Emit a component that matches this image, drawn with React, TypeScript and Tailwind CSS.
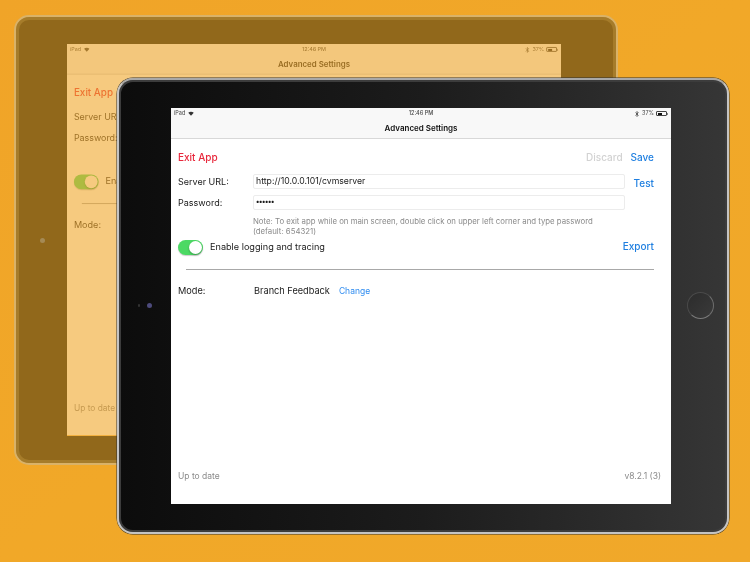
import { Bluetooth } from 'lucide-react';

const blue = 'text-[#1f7fe0]';

function Screen() {
    return (
        <div className="w-[500px] h-[396px] bg-white flex flex-col font-['Inter',sans-serif] text-[#1a1a1a] blur-[0.25px]">
            {/* Status + nav bar */}
            <div className="h-[31px] bg-[#f8f8f8] border-b border-[#d8d8d8] flex flex-col shrink-0">
                <div className="h-[11px] pl-[3px] pr-[3px] flex items-center justify-between text-[5.5px] text-[#444] relative">
                    <div className="flex items-center gap-[3px]">
                        <span>iPad</span>
                        <svg viewBox="0 0 12 9" className="w-[6px] h-[5px] fill-[#333]">
                            <path d="M6 9 0.5 3.2C3.6 0.2 8.4 0.2 11.5 3.2Z" />
                        </svg>
                    </div>
                    <span className="absolute left-1/2 -translate-x-1/2 font-medium">12:46 PM</span>
                    <div className="flex items-center gap-[2px]">
                        <Bluetooth className="w-[6px] h-[6px]" strokeWidth={3} />
                        <span>37%</span>
                        <div className="flex items-center">
                            <div className="w-[11px] h-[5px] border-[0.5px] border-[#444] rounded-[1px] p-[0.5px]">
                                <div className="w-[4.5px] h-full bg-[#111]" />
                            </div>
                            <div className="w-[1px] h-[2px] bg-[#888]" />
                        </div>
                    </div>
                </div>
                <div className="flex-1 flex items-center justify-center text-[8px] font-semibold text-[#111] pb-[1px]">
                    Advanced Settings
                </div>
            </div>

            {/* Form */}
            <div className="flex-1 flex flex-col pl-[7px] pr-[17px] pt-[11px]">
                <div className="flex items-center justify-between h-[14px] text-[10px] font-medium">
                    <span className="text-[#e8283c]">Exit App</span>
                    <div className="flex gap-[8px]">
                        <span className="text-[#d2d2d2]">Discard</span>
                        <span className={blue}>Save</span>
                    </div>
                </div>

                <div className="flex items-center h-[15px] mt-[10px] text-[9px]">
                    <span className="w-[75px] shrink-0">Server URL:</span>
                    <div className="w-[372px] h-[15px] border border-[#ececec] rounded-[2px] flex items-center px-[2px] text-[8.7px]">
                        http://10.0.0.101/cvmserver
                    </div>
                    <span className={`ml-auto mt-[4px] text-[10px] font-medium ${blue}`}>Test</span>
                </div>

                <div className="flex items-center h-[15px] mt-[6px] text-[9px]">
                    <span className="w-[75px] shrink-0">Password:</span>
                    <div className="w-[372px] h-[15px] border border-[#ececec] rounded-[2px] flex items-center px-[2px] text-[7px] font-bold tracking-[-0.3px]">
                        ••••••
                    </div>
                </div>

                <div className="ml-[75px] mt-[6px] text-[7.8px] leading-[10px] text-[#8a8a8a]">
                    <div>Note: To exit app while on main screen, double click on upper left corner and type password</div>
                    <div>(default: 654321)</div>
                </div>

                <div className="flex items-center h-[16px] mt-[3px]">
                    <div className="w-[25px] h-[15px] rounded-full bg-[#4cd964] flex items-center justify-end p-[1px] shadow-[0_1px_1px_rgba(0,0,0,0.2)]">
                        <div className="w-[13px] h-[13px] rounded-full bg-white shadow-[0_1px_2px_rgba(0,0,0,0.3)]" />
                    </div>
                    <span className="ml-[7px] mb-[1px] text-[9.15px]">Enable logging and tracing</span>
                    <span className={`ml-auto mb-[1px] text-[10px] font-medium ${blue}`}>Export</span>
                </div>

                <div className="h-px bg-[#a8a8a8] ml-[8px] mt-[14px]" />

                <div className="flex items-center h-[12px] mt-[15px] text-[9.2px]">
                    <span className="w-[76px] shrink-0">Mode:</span>
                    <span>Branch Feedback</span>
                    <span className="ml-[9px] text-[8.5px] text-[#2f8cf0]">Change</span>
                </div>

                <div className="mt-auto mb-[21px] -mr-[7px] flex justify-between text-[8.5px] text-[#8a8a8a]">
                    <span>Up to date</span>
                    <span>v8.2.1 (3)</span>
                </div>
            </div>
        </div>
    );
}

export default function App() {
    return (
        <div className="relative w-[750px] h-[562px] overflow-hidden bg-gradient-to-br from-[#f0a428] via-[#f1a828] to-[#f0a82a]">
            {/* Back tablet, faded into the orange */}
            <div className="absolute left-[14px] top-[15px] w-[604px] h-[450px] rounded-[15px] border-[2px] border-[#d9b268] bg-[#91681b] shadow-[inset_0_0_0_3px_#a67c2a]">
                <div className="absolute left-[51px] top-[27px] w-[494px] h-[392px] bg-[#f1a72a] overflow-hidden">
                    <div className="opacity-40 origin-top-left scale-[0.988]">
                        <Screen />
                    </div>
                </div>
                <div className="absolute left-[24px] top-[221px] w-[5px] h-[5px] rounded-full bg-[#a58a55]" />
            </div>

            {/* Front tablet */}
            <div className="absolute left-[117px] top-[78px] w-[612px] h-[456px] rounded-[16px] border-[2px] border-[#c4c4c4] border-t-[#a8a8a8] bg-gradient-to-r from-[#0c0c0c] via-[#1c1c1c] to-[#363636] shadow-[inset_0_0_0_2px_#3c3c3c,0_0_0_0.5px_#333]">
                <div className="absolute left-[52px] top-[28px]">
                    <Screen />
                </div>
                <div className="absolute left-[19px] top-[224px] w-[2px] h-[3px] rounded-full bg-[#333]" />
                <div className="absolute left-[28px] top-[223px] w-[5px] h-[5px] rounded-full bg-[#4d4b7c]" />
                <div className="absolute left-[568px] top-[212px] w-[27px] h-[27px] rounded-full bg-gradient-to-br from-[#2c2c2c] to-[#3a3a3a] border border-[#4a4a4a] border-r-[#6e6e6e] border-b-[#7a7a7a]" />
            </div>
        </div>
    );
}
